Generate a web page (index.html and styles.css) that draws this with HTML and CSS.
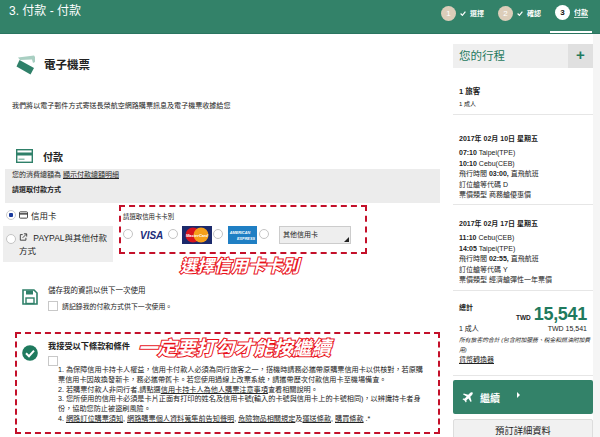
FILE: index.html
```html
<!DOCTYPE html>
<html lang="zh-Hant">
<head>
<meta charset="UTF-8">
<meta name="viewport" content="width=device-width, initial-scale=1.0">
<title>3. 付款 - 付款</title>
<link rel="stylesheet" href="styles.css">
</head>
<body>
<header class="topbar">
  <div class="page-title">3. 付款 - 付款</div>
  <ol class="steps">
    <li class="step done"><span class="step-num">1</span><svg class="step-check" viewBox="0 0 10 8"><path d="M1 4l3 3 5-6" fill="none" stroke="#fff" stroke-width="2"/></svg><span>選擇</span></li>
    <li class="step done"><span class="step-num">2</span><svg class="step-check" viewBox="0 0 10 8"><path d="M1 4l3 3 5-6" fill="none" stroke="#fff" stroke-width="2"/></svg><span>確認</span></li>
    <li class="step current"><span class="step-num">3</span><span class="step-label">付款</span></li>
  </ol>
</header>

<div class="page">
  <main class="main">
    <section class="ticket">
      <div class="sec-head">
        <svg class="ticket-icon" viewBox="0 0 20 20">
          <path d="M2 2.500L18 .500l1 1.500v5l-2 1-1-3.500-12 .500z" fill="#a9cfc2"/>
          <path d="M3.500 5l14.500 8-3.500 6.500L.500 11.500z" fill="#2f8069"/>
        </svg>
        <h2 class="ticket-title">電子機票</h2>
      </div>
      <p class="ticket-text">我們將以電子郵件方式寄送長榮航空網路購票訊息及電子機票收據給您</p>
    </section>

    <section class="pay">
      <div class="sec-head pay-head">
        <svg class="card-icon" viewBox="0 0 17 14">
          <rect x="0.700" y="0.700" width="15.600" height="12.600" fill="#fff" stroke="#2f8069" stroke-width="1.400"/>
          <rect x="1" y="3.500" width="15" height="3" fill="#2f8069"/>
          <rect x="2.500" y="9.500" width="6" height="1.500" fill="#8fbdae"/>
        </svg>
        <h2 class="pay-title">付款</h2>
      </div>
      <div class="pay-note">
        <p>您的消費總額為 <u>顯示付款總額明細</u></p>
        <p class="pay-choose">請選取付款方式</p>
      </div>
      <div class="pay-body">
        <div class="tabs">
          <div class="tab tab-on">
            <span class="radio radio-on"></span>
            <svg class="tab-icon" viewBox="0 0 10 8"><rect x="0.500" y="0.500" width="9" height="7" rx="1" fill="none" stroke="#333"/><rect x="0.500" y="2" width="9" height="1.500" fill="#333"/></svg>
            <span>信用卡</span>
          </div>
          <div class="tab tab-off">
            <span class="radio"></span>
            <div class="tab-text">
              <svg class="tab-icon" viewBox="0 0 10 10"><path d="M8 6v3H1V2h3" fill="none" stroke="#333" stroke-width="1.100"/><path d="M4 6l4.500-4.500M5.500 1h3.500v3.500" fill="none" stroke="#333" stroke-width="1.100"/></svg>
              PAYPAL與其他付款方式
            </div>
          </div>
        </div>
        <div class="cards">
          <div class="cards-label">請選取信用卡卡別</div>
          <div class="cards-row">
            <span class="radio"></span>
            <span class="visa">VISA</span>
            <span class="radio"></span>
            <svg class="brand brand-mc" viewBox="0 0 30 18">
              <rect width="30" height="18" fill="#1c2a6b"/>
              <circle cx="11" cy="9" r="7.500" fill="#d8141d"/>
              <circle cx="19" cy="9" r="7.500" fill="#f6a01a"/>
              <text x="15" y="11" class="mc-text" text-anchor="middle">MasterCard</text>
            </svg>
            <span class="radio"></span>
            <svg class="brand brand-ax" viewBox="0 0 29 18">
              <rect width="29" height="18" fill="#1f7fc4"/>
              <text x="12" y="8" class="ax-text" text-anchor="middle">AMERICAN</text>
              <text x="18" y="13.500" class="ax-text" text-anchor="middle">EXPRESS</text>
            </svg>
            <span class="radio"></span>
            <div class="select">其他信用卡<span class="select-arrow"></span></div>
          </div>
        </div>
      </div>
    </section>

    <section class="save">
      <svg class="side-icon" viewBox="0 0 16 16">
        <path d="M1 1h11l3 3v11H1z" fill="#fff" stroke="#2f8069" stroke-width="1.600"/>
        <rect x="4" y="1.500" width="7" height="4" fill="#2f8069"/>
        <rect x="4" y="9" width="8" height="5.500" fill="#fff" stroke="#2f8069" stroke-width="1.400"/>
      </svg>
      <div>
        <h3 class="small-title">儲存我的資訊以供下一次使用</h3>
        <div class="check-row"><span class="checkbox"></span><span>請記錄我的付款方式供下一次使用。</span></div>
      </div>
    </section>

    <section class="terms">
      <svg class="side-icon" viewBox="0 0 16 16">
        <circle cx="8" cy="8" r="7.800" fill="#1f7a5e"/>
        <path d="M4 8.200l3 3 5-5.500" fill="none" stroke="#fff" stroke-width="2"/>
      </svg>
      <div class="terms-body">
        <h3 class="terms-title">我接受以下條款和條件</h3>
        <span class="checkbox"></span>
        <ol class="terms-list">
          <li>1. 為保障信用卡持卡人權益，信用卡付款人必須為同行旅客之一，搭機時請務必攜帶原購票信用卡以供核對，若原購票信用卡因故換發新卡，務必攜帶舊卡。若您使用過線上改票系統，請攜帶歷次付款信用卡至機場備查。</li>
          <li>2. 若購票付款人非同行者,請點選<u>信用卡持卡人為他人購票注意事項</u>查看相關說明。</li>
          <li>3. 您所使用的信用卡必須是卡片正面有打印的姓名及信用卡號(輸入的卡號與信用卡上的卡號相同)，以辨識持卡者身份，協助您防止被盜刷風險。</li>
          <li>4. <u>網路訂位購票須知</u>, <u>網路購票個人資料蒐集前告知聲明</u>, <u>危險物品相關規定</u>及<u>運送條款</u>, <u>購買條款</u> .*</li>
        </ol>
      </div>
    </section>
  </main>

  <aside class="side">
    <div class="trip-head">
      <div class="trip-title">您的行程</div>
      <div class="trip-plus">+</div>
    </div>
    <div class="block block-pax">
      <div class="bold pax">1 旅客</div>
      <div class="pax-sub">1 成人</div>
    </div>
    <div class="block block-flight">
      <div class="bold date">2017年 02月 10日 星期五</div>
      <div class="row"><b>07:10</b> Taipei(TPE)</div>
      <div class="row"><b>10:10</b> Cebu(CEB)</div>
      <div class="row">飛行時間 <b>03:00,</b> 直飛航班</div>
      <div class="row">訂位艙等代碼 D</div>
      <div class="row">票價類型 商務艙優惠價</div>
    </div>
    <div class="block block-flight block-back">
      <div class="bold date">2017年 02月 17日 星期五</div>
      <div class="row"><b>11:10</b> Cebu(CEB)</div>
      <div class="row"><b>14:05</b> Taipei(TPE)</div>
      <div class="row">飛行時間 <b>02:55,</b> 直飛航班</div>
      <div class="row">訂位艙等代碼 Y</div>
      <div class="row">票價類型 經濟艙彈性一年票價</div>
    </div>
    <div class="block block-total">
      <div class="bold">總計</div>
      <div class="total"><span class="total-cur">TWD</span><span class="total-num">15,541</span></div>
      <div class="total-row"><span>1 成人</span><span>TWD 15,541</span></div>
      <p class="total-note">所有旅客的合計 (包含附加服務、稅金和燃油附加費用)</p>
      <u class="total-link">貨幣轉換器</u>
    </div>
    <div class="btn-next">
      <svg class="plane" viewBox="0 0 12 12"><path d="M11.500.500c-1-.7-2.200 0-3 .8L6.800 3 2 1.500 1 2.500 5 5 3 7.200 1.300 7 .500 7.800l2.200 1.500 1.500 2.200.8-.8L4.800 9 7 7l2.500 4 1-1L9 5.200l1.700-1.700c.8-.8 1.500-2 .8-3z" fill="#fff"/></svg>
      <span class="btn-label">繼續</span>
      <span class="btn-arrow"></span>
    </div>
    <div class="btn-detail">預訂詳細資料</div>
  </aside>
</div>

<!-- 紅框跟說明文字是後來標上去的 -->
<div class="mark mark-cards"></div>
<div class="mark mark-terms"></div>
<div class="note note-cards">選擇信用卡卡別</div>
<div class="note note-terms">一定要打勾才能按繼續</div>
</body>
</html>
```

FILE: styles.css
```css
* {
  padding: 0;
  margin: 0;
  box-sizing: border-box;
  font-family: "Liberation Sans", "Noto Sans CJK TC", sans-serif;
}
html, body {
  height: 437px;
  overflow: hidden;
}
body {
  position: relative;
  width: 600px;
  background-color: #f5f5f5;
  color: #222;
  font-size: 7px;
}
ol {
  list-style: none;
}

/* header */
.topbar {
  display: flex;
  justify-content: space-between;
  height: 34px;
  background-color: #338269;
  border-bottom: 1px solid #2a7560;
  color: white;
}
.page-title {
  padding: 2px 0 0 9px;
  font-size: 12px;
  line-height: 18px;
}
.steps {
  display: flex;
  margin-right: 8px;
}
.step {
  display: flex;
  align-items: center;
  height: 33px;
  padding-bottom: 7px;
  font-size: 7px;
  font-weight: bold;
}
.step.done {
  margin-right: 14px;
}
.step.current {
  padding: 0 4px 7px 5px;
  margin-left: -5px;
  border-bottom: 2px solid white;
}
.step-num {
  width: 15px;
  height: 15px;
  margin-right: 4px;
  border-radius: 50%;
  background-color: #dccdb9;
  text-align: center;
  font-size: 8px;
  line-height: 15px;
  font-weight: normal;
}
.current .step-num {
  background-color: white;
  color: #111;
  font-weight: bold;
}
.step-check {
  width: 6px;
  height: 5px;
  margin-right: 4px;
}
.step-label {
  border-bottom: 1px solid #cfe0da;
}

/* layout */
.page {
  display: flex;
  height: 403px;
}
.main {
  width: 446px;
  background-color: white;
}
.side {
  width: 147px;
  padding: 10px 0 0 7px;
  background-color: white;
}

/* ticket */
.sec-head {
  display: flex;
  align-items: center;
}
.ticket {
  padding: 21px 0 0 16px;
}
.ticket-icon {
  width: 20px;
  height: 20px;
  margin-right: 8px;
}
.ticket-title {
  font-size: 11.500px;
  line-height: 20px;
}
.ticket-text {
  margin: 26px 0 0 -4px;
  font-size: 7.050px;
  line-height: 10px;
}

/* payment */
.pay {
  margin-top: 38px;
}
.pay-head {
  padding-left: 16px;
  height: 14px;
}
.card-icon {
  width: 17px;
  height: 14px;
  margin-right: 10px;
}
.pay-title {
  font-size: 10px;
}
.pay-note {
  height: 34px;
  margin: 6px 6px 0 5px;
  padding: 1px 7px;
  background-color: #ececec;
  font-size: 7px;
  line-height: 10px;
}
.pay-choose {
  margin-top: 5px;
  font-weight: bold;
}
.pay-body {
  display: flex;
  padding-left: 3px;
}
.tabs {
  width: 110px;
}
.tab {
  display: flex;
  padding-left: 3px;
  font-size: 8.500px;
}
.tab-on {
  height: 23px;
  align-items: center;
  background-color: white;
}
.tab-off {
  height: 36px;
  padding-top: 6px;
  background-color: #eeeeee;
}
.tab-off .radio {
  margin-top: 2px;
}
.tab-text {
  width: 100px;
  padding-left: 3px;
  line-height: 13px;
}
.tab-icon {
  width: 9px;
  height: 8px;
  margin: 0 3px 0 3px;
}
.tab-off .tab-icon {
  margin-left: 0;
}
.radio {
  flex: none;
  width: 10px;
  height: 10px;
  border: 1px solid #c4c4c4;
  border-radius: 50%;
  background-color: white;
}
.radio-on {
  border-color: #ccc;
  background: radial-gradient(circle, #1a3a9c 0 2px, white 2.500px);
}
.cards {
  padding: 9px 0 0 10px;
}
.cards-label {
  font-size: 6.400px;
  line-height: 9px;
}
.cards-row {
  display: flex;
  align-items: center;
  margin-top: 4px;
  height: 20px;
}
.cards-row .radio {
  margin-top: -2px;
}
.visa {
  width: 35px;
  padding-left: 7px;
  color: #1a2b7a;
  font-size: 10px;
  font-weight: bold;
  font-style: italic;
}
.brand {
  height: 18px;
}
.brand-mc {
  width: 30px;
  margin: 0 1px 0 4px;
}
.brand-ax {
  width: 29px;
  margin: 0 2px 0 5px;
}
.mc-text {
  fill: white;
  font-size: 4px;
  font-weight: bold;
  font-style: italic;
}
.ax-text {
  fill: white;
  font-size: 3.800px;
  font-weight: bold;
  font-style: italic;
}
.select {
  position: relative;
  width: 72px;
  height: 18px;
  margin-left: 10px;
  padding-left: 3px;
  background-color: #eee;
  border: 1px solid #ccc;
  font-size: 7px;
  line-height: 15px;
}
.select-arrow {
  position: absolute;
  right: 1px;
  bottom: 1px;
  border-left: 5px solid transparent;
  border-bottom: 5px solid #222;
}

/* save + terms */
.save {
  display: flex;
  margin-top: 24px;
  padding-left: 22px;
}
.side-icon {
  flex: none;
  width: 16px;
  height: 16px;
  margin: 3px 10px 0 0;
}
.small-title {
  font-size: 7.500px;
  line-height: 10px;
  font-weight: normal;
}
.check-row {
  display: flex;
  align-items: center;
  height: 10px;
  margin-top: 5px;
  font-size: 6.900px;
}
.checkbox {
  display: block;
  flex: none;
  width: 10px;
  height: 10px;
  margin-right: 4px;
  background-color: #fff;
  border: 1px solid #c8c8c8;
}
.terms {
  display: flex;
  margin-top: 31px;
  padding-left: 22px;
}
.terms-body {
  width: 376px;
}
.terms-title {
  margin-bottom: 4px;
  font-size: 8.200px;
  line-height: 10px;
}
.terms-list {
  margin-left: 10px;
  font-size: 7.150px;
  line-height: 9.800px;
}

/* right side */
.trip-head {
  display: flex;
  justify-content: space-between;
  height: 24px;
  background-color: #efefef;
}
.trip-title {
  padding-left: 6px;
  color: #1f7a5e;
  font-size: 11.500px;
  line-height: 24px;
}
.trip-plus {
  width: 25px;
  background-color: #e0e0e0;
  color: #1f7a5e;
  text-align: center;
  font-size: 15px;
  font-weight: bold;
  line-height: 22px;
}
.block {
  padding: 0 6px;
  border-bottom: 1px solid #e6e6e6;
}
.bold {
  font-weight: bold;
}
.block-pax {
  height: 47px;
  padding-top: 19px;
}
.pax {
  font-size: 7.500px;
  line-height: 10px;
}
.pax-sub {
  margin-top: 3px;
  font-size: 6px;
  line-height: 9px;
}
.block-flight {
  height: 90px;
  padding-top: 19px;
}
.block-back {
  height: 86px;
  padding-top: 14px;
}
.date {
  margin-bottom: 4px;
  font-size: 7px;
  line-height: 10px;
}
.row {
  font-size: 7px;
  line-height: 10.500px;
}
.block-total {
  height: 85px;
  padding-top: 12px;
  font-size: 7px;
  line-height: 10px;
}
.total {
  display: flex;
  justify-content: flex-end;
  align-items: baseline;
  height: 20px;
  margin-top: -9px;
}
.total-cur {
  margin-right: 3px;
  font-size: 6.500px;
  font-weight: bold;
}
.total-num {
  color: #1f7a5e;
  font-size: 18px;
  line-height: 20px;
  font-weight: bold;
  letter-spacing: -0.300px;
}
.total-row {
  display: flex;
  justify-content: space-between;
}
.total-note {
  margin: 1px -4px 0 0;
  font-size: 5.800px;
  font-style: italic;
  line-height: 10px;
}
.total-link {
  display: block;
}
.btn-next {
  display: flex;
  align-items: center;
  height: 34px;
  margin-top: 4px;
  padding-left: 9px;
  background-color: #338269;
  border-radius: 2px;
  color: white;
}
.plane {
  width: 11px;
  height: 11px;
  margin-right: 7px;
}
.btn-label {
  width: 37px;
  font-size: 10px;
  font-weight: bold;
}
.btn-arrow {
  margin-top: -4px;
  border-left: 3px solid white;
  border-top: 3px solid transparent;
  border-bottom: 3px solid transparent;
}
.btn-detail {
  height: 30px;
  margin-top: 5px;
  background-color: #f1f1f1;
  border: 1px solid #ddd;
  border-radius: 2px;
  text-align: center;
  color: #222;
  font-size: 9.300px;
  line-height: 22px;
}

/* annotations on top of the screenshot */
.mark {
  position: absolute;
  border: 2px dashed #c4102a;
}
.mark-cards {
  left: 119px;
  top: 205px;
  width: 248px;
  height: 49px;
}
.mark-terms {
  left: 15px;
  top: 332px;
  width: 425px;
  height: 102px;
}
.note {
  position: absolute;
  color: white;
  font-weight: bold;
  font-style: italic;
  -webkit-text-stroke: 2px #e8111a;
  paint-order: stroke fill;
  white-space: nowrap;
}
.note-cards {
  left: 180px;
  top: 256px;
  font-size: 17px;
  line-height: 22px;
}
.note-terms {
  left: 138px;
  top: 336px;
  font-size: 19.300px;
  line-height: 26px;
}
```
